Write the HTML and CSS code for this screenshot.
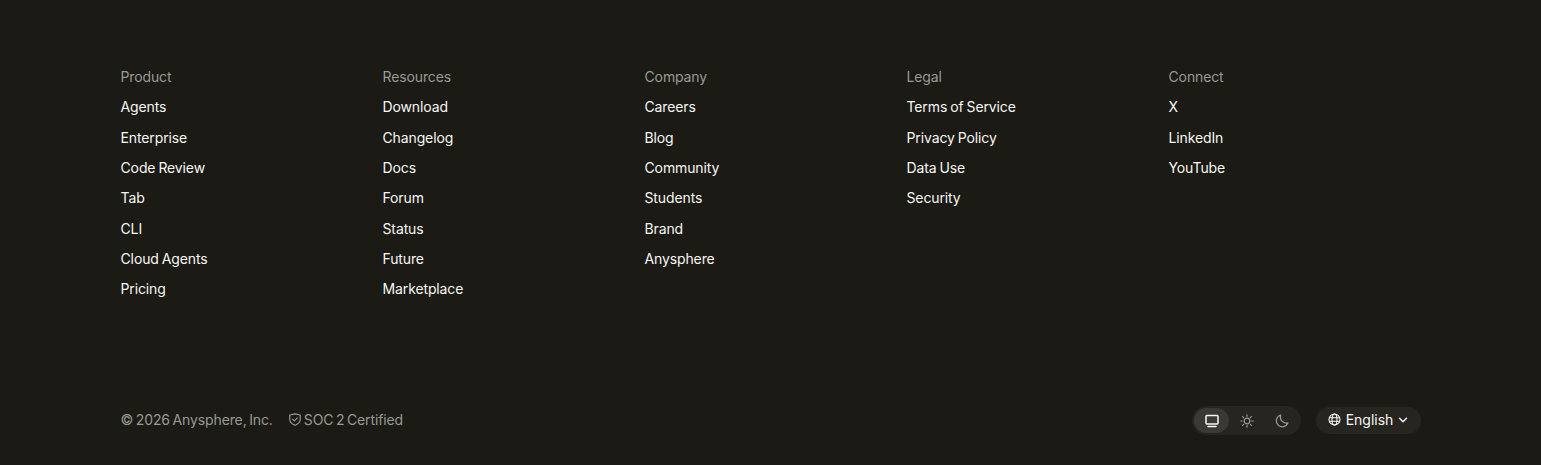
FILE: index.html
```html
<!DOCTYPE html>
<html lang="en">
<head>
    <meta charset="UTF-8">
    <meta name="viewport" content="width=device-width, initial-scale=1.0">
    <title>Footer</title>
    <link rel="stylesheet" href="styles.css">
</head>
<body>
    <footer class="footer">
        <div class="columns">
            <div class="column">
                <h3>Product</h3>
                <a href="#">Agents</a>
                <a href="#">Enterprise</a>
                <a href="#">Code Review</a>
                <a href="#">Tab</a>
                <a href="#">CLI</a>
                <a href="#">Cloud Agents</a>
                <a href="#">Pricing</a>
            </div>
            <div class="column">
                <h3>Resources</h3>
                <a href="#">Download</a>
                <a href="#">Changelog</a>
                <a href="#">Docs</a>
                <a href="#">Forum</a>
                <a href="#">Status</a>
                <a href="#">Future</a>
                <a href="#">Marketplace</a>
            </div>
            <div class="column">
                <h3>Company</h3>
                <a href="#">Careers</a>
                <a href="#">Blog</a>
                <a href="#">Community</a>
                <a href="#">Students</a>
                <a href="#">Brand</a>
                <a href="#">Anysphere</a>
            </div>
            <div class="column">
                <h3>Legal</h3>
                <a href="#">Terms of Service</a>
                <a href="#">Privacy Policy</a>
                <a href="#">Data Use</a>
                <a href="#">Security</a>
            </div>
            <div class="column">
                <h3>Connect</h3>
                <a href="#">X</a>
                <a href="#">LinkedIn</a>
                <a href="#">YouTube</a>
            </div>
        </div>
        <div class="bottom">
            <div class="legal">
                <span>© 2026 Anysphere, Inc.</span>
                <span class="soc">
                    <svg width="12" height="13" viewBox="0 0 12 13" fill="none" stroke="currentColor" stroke-width="1.2" stroke-linecap="round" stroke-linejoin="round"><path d="M.8 2 6 .8 11.2 2v4.4c0 2.8-2.3 4.6-5.2 5.800C3.100 11 .8 9.200.8 6.400z"/><path d="M3.700 6.200l1.600 1.600 3-3"/></svg>
                    <span>SOC 2 Certified</span>
                </span>
            </div>
            <div class="controls">
                <div class="theme">
                    <button class="theme-btn active">
                        <svg width="14" height="14" viewBox="0 0 14 14" fill="none" stroke="currentColor" stroke-width="1.5" stroke-linecap="round" stroke-linejoin="round"><rect x="1" y="1.500" width="12" height="8.500" rx="1"/><path d="M3 12.500h8"/></svg>
                    </button>
                    <button class="theme-btn">
                        <svg width="14" height="14" viewBox="0 0 14 14" fill="none" stroke="currentColor" stroke-width="1.2" stroke-linecap="round"><circle cx="7" cy="7" r="2.800"/><path d="M7 .8v1.500M7 11.700v1.500M.8 7h1.500M11.700 7h1.500M2.600 2.600l1 1M10.400 10.400l1 1M2.600 11.400l1-1M10.400 3.600l1-1"/></svg>
                    </button>
                    <button class="theme-btn">
                        <svg width="14" height="14" viewBox="0 0 14 14" fill="none" stroke="currentColor" stroke-width="1.2" stroke-linecap="round" stroke-linejoin="round"><path d="M5.700 1A6 6 0 1 0 13 8.800 6 6 0 0 1 5.700 1z"/></svg>
                    </button>
                </div>
                <button class="lang">
                    <svg width="13" height="13" viewBox="0 0 13 13" fill="none" stroke="currentColor" stroke-width="1.100"><circle cx="6.500" cy="6.500" r="5.500"/><ellipse cx="6.500" cy="6.500" rx="2.500" ry="5.500"/><path d="M1 4.700h11M1 8.300h11"/></svg>
                    <span>English</span>
                    <svg width="10" height="10" viewBox="0 0 10 10" fill="none" stroke="currentColor" stroke-width="1.500" stroke-linecap="round" stroke-linejoin="round"><path d="M1.500 3.300 5 6.800l3.500-3.500"/></svg>
                </button>
            </div>
        </div>
    </footer>
</body>
</html>
```

FILE: styles.css
```css
body {
    margin: 0;
    background: #1b1a15;
    color: #f7f7f4;
    font-family: 'Inter', 'Liberation Sans', sans-serif;
    font-size: 14px;
    font-weight: 440;
    letter-spacing: -0.12px;
    word-spacing: -0.8px;
}

.footer {
    width: 1300px;
    height: 465px;
    margin: 0 auto;
    padding-top: 67px;
    box-sizing: border-box;
}

.columns {
    display: grid;
    grid-template-columns: repeat(5, 252px);
    gap: 10px;
    height: 339px;
}

.column h3 {
    margin: 0 0 10.2px;
    font-size: 14px;
    font-weight: 440;
    line-height: 20px;
    color: #9a9993;
}

.column a {
    display: block;
    height: 20px;
    margin-bottom: 10.33px;
    line-height: 20px;
    color: #f7f7f4;
    text-decoration: none;
}

.bottom {
    display: flex;
    justify-content: space-between;
    align-items: center;
}

.legal {
    display: flex;
    align-items: center;
    gap: 16px;
    padding-bottom: 2px;
    color: #9a9993;
    word-spacing: -1.2px;
}

.soc {
    display: flex;
    align-items: center;
    gap: 3px;
}

.controls {
    display: flex;
    align-items: center;
    gap: 15px;
}

.theme {
    display: flex;
    padding: 2px;
    border-radius: 15px;
    background: #26251f;
}

.theme-btn {
    display: flex;
    align-items: center;
    justify-content: center;
    width: 35px;
    height: 25px;
    padding: 0 0 0 2px;
    border: none;
    border-radius: 13px;
    background: none;
    color: #9a9993;
}

.theme-btn.active {
    padding: 0 0 0 1px;
    background: #3a3933;
    color: #f7f7f4;
}

.lang {
    display: flex;
    align-items: center;
    justify-content: center;
    gap: 5px;
    width: 105px;
    height: 27px;
    padding: 0 0 2px;
    border: none;
    border-radius: 14px;
    background: #26251f;
    color: #f7f7f4;
    font: inherit;
    letter-spacing: 0;
}
```
